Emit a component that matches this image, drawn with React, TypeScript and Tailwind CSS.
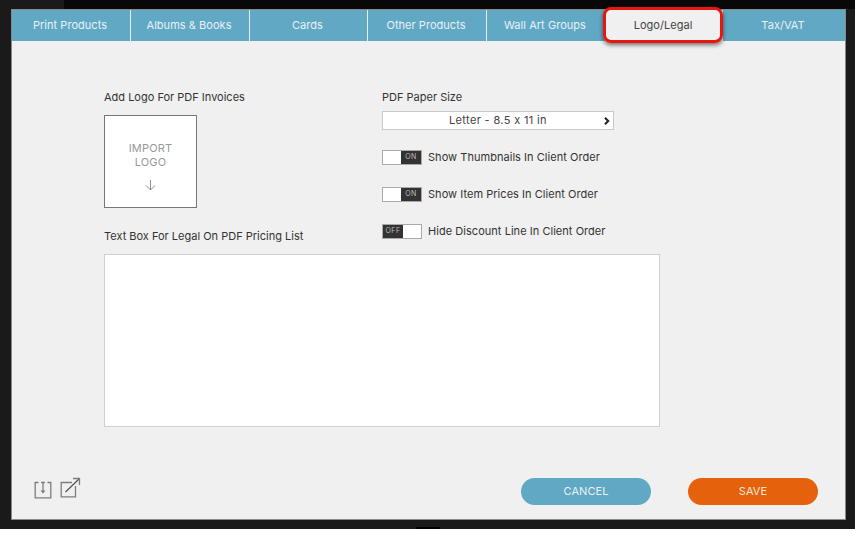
import React from 'react';

const tabs = [
  { label: 'Print Products', width: 'w-[119px]' },
  { label: 'Albums & Books', width: 'w-[119px]' },
  { label: 'Cards', width: 'w-[118px]' },
  { label: 'Other Products', width: 'w-[119px]' },
  { label: 'Wall Art Groups', width: 'w-[118px]' },
  { label: 'Logo/Legal', width: 'w-[118px]', active: true },
  { label: 'Tax/VAT', width: 'flex-1' },
];

function Toggle({ on }: { on: boolean }) {
  return (
    <div className="flex h-[15px] w-10 shrink-0 border border-[#a9a9a9] bg-white">
      {!on && (
        <div className="flex w-[20px] items-center justify-center bg-[#333333] text-[7px] tracking-[0.5px] text-[#bdbdbd]">
          OFF
        </div>
      )}
      <div className="flex-1" />
      {on && (
        <div className="flex w-[20px] items-center justify-center bg-[#333333] text-[7px] tracking-[0.5px] text-[#bdbdbd]">
          ON
        </div>
      )}
    </div>
  );
}

function ToggleRow({ on, label }: { on: boolean; label: string }) {
  return (
    <div className="flex h-[15px] items-center gap-[6px]">
      <Toggle on={on} />
      <span className="text-[11px] tracking-[0.04px] text-[#333333]">{label}</span>
    </div>
  );
}

export default function App() {
  return (
    <div className="h-[542px] w-[855px] overflow-hidden bg-white font-['Inter',sans-serif]">
      <div className="relative h-[529px] bg-[#1a1a1a] pl-[11px] pr-[9px] pt-[9px]">
        {/* top dark strip */}
        <div className="absolute left-[64px] right-0 top-0 h-[9px] bg-[#080808]" />
        <div className="absolute bottom-0 left-[416px] h-[2px] w-[24px] bg-black" />

        <div className="relative flex h-[511px] flex-col border border-[#8a8a8a] bg-[#f0f0f0]">
          {/* Tabs */}
          <div className="flex h-[31px] shrink-0 bg-[#61a8c4]">
            {tabs.map((tab, i) => (
              <div
                key={tab.label}
                className={`flex items-center justify-center pr-[2px] text-[11px] tracking-[0.04px] ${tab.width} ${
                  tab.active ? 'bg-[#f0f0f0] text-[#444444]' : 'text-[#e8f2f6]'
                } ${i < 4 ? 'border-r border-[#e2eef3]' : ''}`}
              >
                {tab.label}
              </div>
            ))}
          </div>

          {/* Callout around active tab */}
          <div className="absolute left-[591px] top-[-3px] h-[36px] w-[120px] rounded-[8px] border-[3px] border-[#e8160c] shadow-[0_2px_4px_rgba(0,0,0,0.55)]" />

          {/* Form */}
          <div className="flex pl-[92px] pt-[49px]">
            <div className="w-[278px]">
              <div className="text-[11px] leading-[14px] text-[#333333]">
                Add Logo For PDF Invoices
              </div>
              <div className="mt-[11px] flex h-[93px] w-[93px] flex-col items-center border border-[#777777] bg-white pt-[25px]">
                <div className="text-center text-[11px] leading-[14px] tracking-[0.2px] text-[#999999]">
                  IMPORT
                  <br />
                  LOGO
                </div>
                <svg className="mt-[10px]" width="11" height="12" viewBox="0 0 11 12" fill="none" stroke="#8c8c8c" strokeWidth="1">
                  <path d="M5.5 1v10M1 6.5l4.5 4.5L10 6.5" />
                </svg>
              </div>
            </div>
            <div className="flex-1">
              <div className="text-[11px] leading-[14px] text-[#333333]">PDF Paper Size</div>
              <div className="relative mt-[7px] flex h-[19px] w-[232px] items-center justify-center border border-[#c9c9c9] bg-white text-[11px] tracking-[0.35px] text-[#444444]">
                Letter - 8.5 x 11 in
                <svg className="absolute right-[3px] top-[5px]" width="6" height="8" viewBox="0 0 6 8" fill="none" stroke="#222222" strokeWidth="2">
                  <path d="M1 .8L4.2 4 1 7.2" />
                </svg>
              </div>
              <div className="mt-[20px] flex flex-col gap-[22px]">
                <ToggleRow on label="Show Thumbnails In Client Order" />
                <ToggleRow on label="Show Item Prices In Client Order" />
                <ToggleRow on={false} label="Hide Discount Line In Client Order" />
              </div>
            </div>
          </div>

          {/* Legal text box */}
          <div className="pl-[92px]">
            <div className="mt-[-10px] text-[11px] leading-[14px] text-[#333333]">
              Text Box For Legal On PDF Pricing List
            </div>
            <div className="mt-[11px] h-[173px] w-[556px] border border-[#d0d0d0] bg-white" />
          </div>

          {/* Footer */}
          <div className="mt-[51px] flex items-start pl-[22px] pr-[27px]">
            <div className="flex items-start gap-[8px] pt-[2px]">
              <svg className="mt-[1px]" width="18" height="18" viewBox="0 0 18 18" fill="none" stroke="#7d7d7d" strokeWidth="1.3">
                <path d="M4.5 1.5H1.2v15.3h15.6V1.5h-3.3" />
                <path d="M7 1.5h4M9 1.5v10" />
                <path d="M6.5 9.5L9 12.5l2.5-3z" fill="#7d7d7d" stroke="none" />
              </svg>
              <svg className="mt-[-3px]" width="21" height="21" viewBox="0 0 21 21" fill="none" stroke="#7d7d7d" strokeWidth="1.3">
                <path d="M12 5.5H1.2v14.3h14.3V9" />
                <path d="M5.5 15L19 2" stroke="#555555" />
                <path d="M13 1.5h6.5V8" />
              </svg>
            </div>
            <div className="flex-1" />
            <button className="flex h-[27px] w-[130px] items-center justify-center rounded-full bg-[#61a8c4] text-[11px] tracking-[0.05px] text-[#e8f2f6]">
              CANCEL
            </button>
            <button className="ml-[37px] flex h-[27px] w-[130px] items-center justify-center rounded-full bg-[#e5610c] text-[11px] tracking-[0.05px] text-[#fbe6d8]">
              SAVE
            </button>
          </div>
        </div>
      </div>
    </div>
  );
}
